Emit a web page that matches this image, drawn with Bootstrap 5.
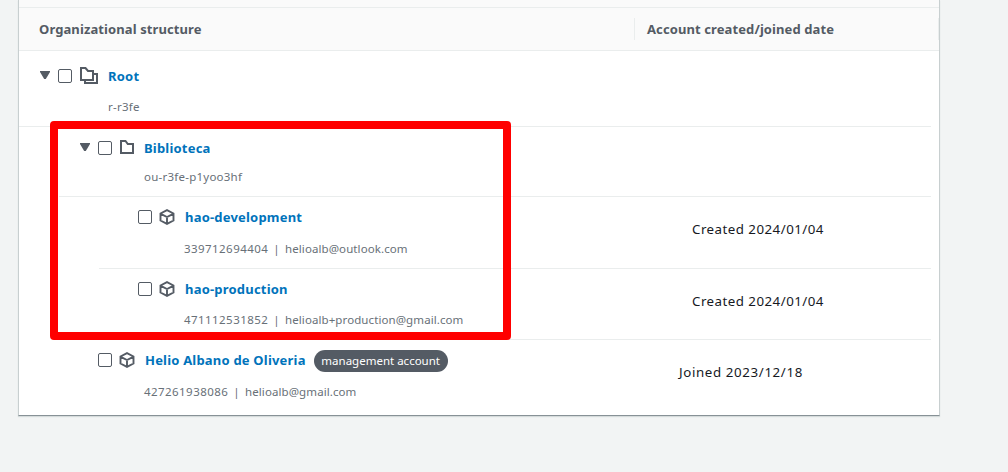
<!DOCTYPE html>
<html lang="en">
<head>
<meta charset="utf-8">
<meta name="viewport" content="width=device-width, initial-scale=1">
<title>Organizational structure</title>
<link href="https://cdn.jsdelivr.net/npm/bootstrap@5.3.0/dist/css/bootstrap.min.css" rel="stylesheet">
<script src="https://cdn.jsdelivr.net/npm/bootstrap@5.3.0/dist/js/bootstrap.bundle.min.js" defer></script>
<style>
body{background:#f2f4f4;font-family:"Noto Sans",sans-serif;font-size:13px;line-height:20px;color:#16191f;height:472px;overflow:hidden}
.panel{width:922px;height:416px;margin-left:18px;background:#fff;border:1px solid #c8cfd0;border-top:0;border-bottom-color:#879196;box-shadow:0 1px 1px #d5dbdb}
.strip{height:8px;background:#fafafa;border-bottom:1px solid #eaeded}
.tree-head{height:43px;background:#fafafa;border-bottom:1px solid #eaeded;color:#545b64;font-weight:700;letter-spacing:.1px;line-height:22px}
.head-name{width:616px;height:22px;padding-left:20px;border-right:1px solid #eaeded}
.head-date{width:304px;height:22px;padding-left:12px;border-right:1px solid #eaeded}
.node{margin-right:8px;height:var(--h);border-bottom:1px solid #eaeded}
.node:last-child{border:0}
.lv1{margin-left:40px}
.lv2{margin-left:80px}
.node-main{padding-top:var(--pt,10px)}
.line{height:20px}
.twist{width:39px;padding:0 0 2px 21px}
.form-check-input.pick{width:14px;height:14px;margin:0;border:1px solid #545b64;border-radius:2px}
.glyph{width:26px;margin-left:7px}
.glyph-folder{width:24px;margin-left:8px;padding-bottom:2px}
.glyph-root{width:28px;margin-left:8px;padding-bottom:1px}
.title{color:#0073bb;font-weight:700;text-decoration:none;white-space:nowrap;letter-spacing:.2px}
.meta{color:#687078;font-size:11.5px;height:20px;margin-top:var(--mt,11px);padding-left:85px;white-space:nowrap;letter-spacing:.24px}
.lv0 .meta{padding-left:89px}
.acct{width:84px;letter-spacing:.44px}
.bar{width:17px;text-align:center}
.mail{letter-spacing:.09px}
.date{padding-top:22px;width:239px;font-size:13.3px;letter-spacing:.48px;white-space:nowrap}
.lv1 .date{width:252px;letter-spacing:.63px}
.tag{background:#545b64;font-weight:400;font-size:11.5px;line-height:22px;height:22px;width:134px;padding:0;margin-left:8px;margin-top:2px}
.highlight{left:50px;top:121px;width:461px;height:219px;border:8px solid red;border-radius:4px}
svg{display:block;fill:none;stroke:#545b64;stroke-width:2}
</style>
</head>
<body>
<svg width="0" height="0" class="position-absolute" aria-hidden="true">
<symbol id="cube" viewBox="0 0 16 16"><path d="M8 1.1 14.5 4.5V11.5L8 14.9 1.5 11.5V4.5ZM1.8 4.8 8 8 14.2 4.8M8 8V14.5" stroke-width="1.9"/></symbol>
<symbol id="folder" viewBox="0 0 14 14"><path d="M1 13V1H5.5L7.8 4H13V13Z"/></symbol>
<symbol id="folders" viewBox="0 0 18 17"><path d="M1 13V1H5.5L8 4H13V13ZM14 7H17V16H5V13"/></symbol>
<symbol id="caret" viewBox="0 0 10 8"><path d="M0 0H10V1L5.8 8H4.2L0 1Z" fill="#545b64" stroke="none"/></symbol>
</svg>
<main class="panel">
  <div class="strip"></div>
  <div class="tree-head d-flex align-items-center">
    <div class="head-name">Organizational structure</div>
    <div class="head-date">Account created/joined date</div>
  </div>

  <div class="node lv0 d-flex" style="--h:76px;--pt:15px">
    <div class="node-main flex-grow-1">
      <div class="line d-flex align-items-center">
        <div class="twist"><svg width="10" height="8"><use href="#caret"/></svg></div>
        <input class="form-check-input pick" type="checkbox" aria-label="Root">
        <div class="glyph-root"><svg width="18" height="17"><use href="#folders"/></svg></div>
        <a class="title" href="#">Root</a>
      </div>
      <div class="meta">r-r3fe</div>
    </div>
  </div>

  <div class="node lv1 d-flex" style="--h:70px;--pt:11px;--mt:9px">
    <div class="node-main flex-grow-1">
      <div class="line d-flex align-items-center">
        <div class="twist"><svg width="10" height="8"><use href="#caret"/></svg></div>
        <input class="form-check-input pick" type="checkbox" aria-label="Biblioteca">
        <div class="glyph-folder"><svg width="14" height="14"><use href="#folder"/></svg></div>
        <a class="title" href="#">Biblioteca</a>
      </div>
      <div class="meta">ou-r3fe-p1yoo3hf</div>
    </div>
  </div>

  <div class="node lv2 d-flex" style="--h:72px;--mt:12px">
    <div class="node-main flex-grow-1">
      <div class="line d-flex align-items-center">
        <div class="twist"></div>
        <input class="form-check-input pick" type="checkbox" aria-label="hao-development">
        <div class="glyph"><svg width="16" height="16"><use href="#cube"/></svg></div>
        <a class="title" href="#">hao-development</a>
      </div>
      <div class="meta d-flex"><span class="acct">339712694404</span><span class="bar">|</span><span class="mail">helioalb@outlook.com</span></div>
    </div>
    <div class="date">Created 2024/01/04</div>
  </div>

  <div class="node lv2 d-flex" style="--h:71px">
    <div class="node-main flex-grow-1">
      <div class="line d-flex align-items-center">
        <div class="twist"></div>
        <input class="form-check-input pick" type="checkbox" aria-label="hao-production">
        <div class="glyph"><svg width="16" height="16"><use href="#cube"/></svg></div>
        <a class="title" href="#">hao-production</a>
      </div>
      <div class="meta d-flex"><span class="acct">471112531852</span><span class="bar">|</span><span class="mail">helioalb+production@gmail.com</span></div>
    </div>
    <div class="date">Created 2024/01/04</div>
  </div>

  <div class="node lv1 d-flex" style="--h:75px;--mt:12px">
    <div class="node-main flex-grow-1">
      <div class="line d-flex align-items-center">
        <div class="twist"></div>
        <input class="form-check-input pick" type="checkbox" aria-label="Helio Albano de Oliveria">
        <div class="glyph"><svg width="16" height="16"><use href="#cube"/></svg></div>
        <a class="title" href="#">Helio Albano de Oliveria</a>
        <span class="badge rounded-pill tag">management account</span>
      </div>
      <div class="meta d-flex"><span class="acct">427261938086</span><span class="bar">|</span><span class="mail">helioalb@gmail.com</span></div>
    </div>
    <div class="date">Joined 2023/12/18</div>
  </div>
</main>
<div class="highlight position-absolute pe-none"></div>
</body>
</html>
